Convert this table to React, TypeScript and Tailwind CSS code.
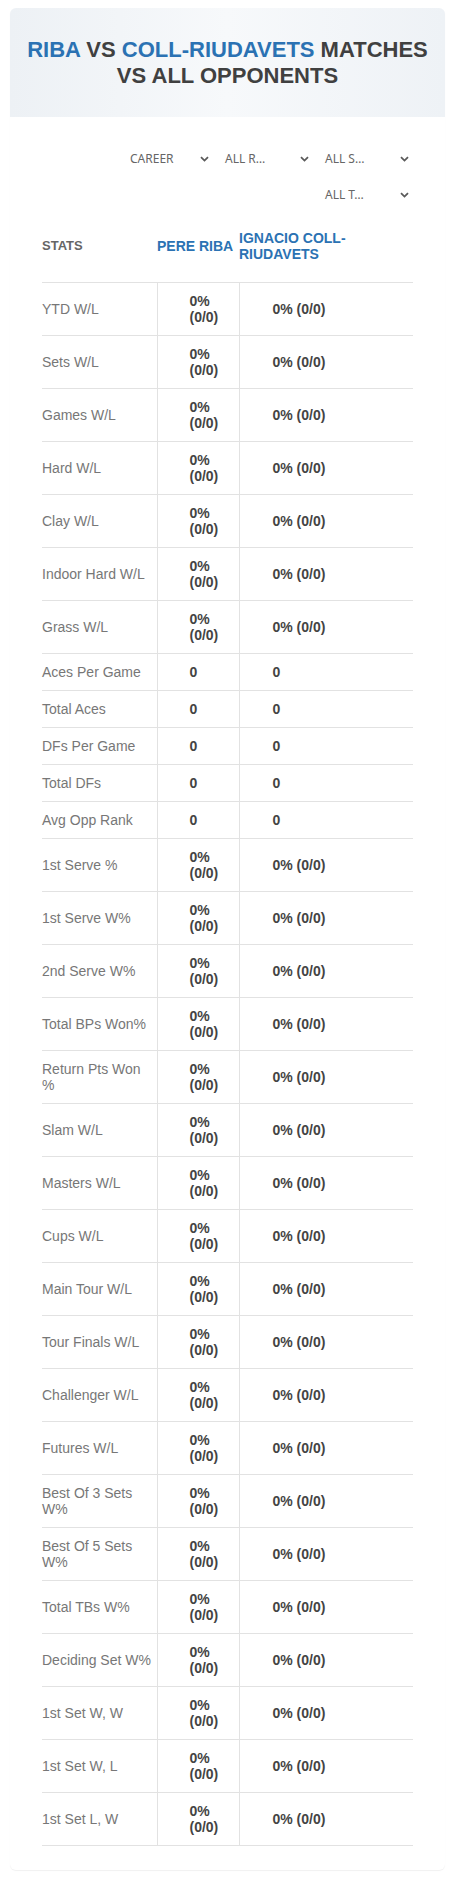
import React from "react";

type Row = { label: string; kind: "pct" | "num" };

const rows: Row[] = [
  { label: "YTD W/L", kind: "pct" },
  { label: "Sets W/L", kind: "pct" },
  { label: "Games W/L", kind: "pct" },
  { label: "Hard W/L", kind: "pct" },
  { label: "Clay W/L", kind: "pct" },
  { label: "Indoor Hard W/L", kind: "pct" },
  { label: "Grass W/L", kind: "pct" },
  { label: "Aces Per Game", kind: "num" },
  { label: "Total Aces", kind: "num" },
  { label: "DFs Per Game", kind: "num" },
  { label: "Total DFs", kind: "num" },
  { label: "Avg Opp Rank", kind: "num" },
  { label: "1st Serve %", kind: "pct" },
  { label: "1st Serve W%", kind: "pct" },
  { label: "2nd Serve W%", kind: "pct" },
  { label: "Total BPs Won%", kind: "pct" },
  { label: "Return Pts Won %", kind: "pct" },
  { label: "Slam W/L", kind: "pct" },
  { label: "Masters W/L", kind: "pct" },
  { label: "Cups W/L", kind: "pct" },
  { label: "Main Tour W/L", kind: "pct" },
  { label: "Tour Finals W/L", kind: "pct" },
  { label: "Challenger W/L", kind: "pct" },
  { label: "Futures W/L", kind: "pct" },
  { label: "Best Of 3 Sets W%", kind: "pct" },
  { label: "Best Of 5 Sets W%", kind: "pct" },
  { label: "Total TBs W%", kind: "pct" },
  { label: "Deciding Set W%", kind: "pct" },
  { label: "1st Set W, W", kind: "pct" },
  { label: "1st Set W, L", kind: "pct" },
  { label: "1st Set L, W", kind: "pct" },
];

function Chevron() {
  return (
    <svg width="9" height="6" viewBox="0 0 9 6" className="shrink-0">
      <path d="M1 1.2 L4.5 4.6 L8 1.2" fill="none" stroke="#5a5a5a" strokeWidth="1.8" />
    </svg>
  );
}

function Select({ label, first }: { label: string; first?: boolean }) {
  return (
    <div
      className={`w-[100px] h-[30px] flex items-center justify-between pr-[4px] text-[12px] text-[#666] ${
        first ? "pl-[17px]" : "pl-[12px]"
      }`}
      style={{ fontFamily: '"Noto Sans", "Open Sans", sans-serif' }}
    >
      <span>{label}</span>
      <Chevron />
    </div>
  );
}

export default function App() {
  return (
    <div
      className="w-[455px] bg-white pt-[8px] pb-[10px]"
      style={{ fontFamily: '"Liberation Sans", Arial, sans-serif' }}
    >
      <div className="mx-[10px] rounded-[6px] bg-white shadow-[0_1px_1px_rgba(0,0,0,0.06)] pb-[24px]">
        <div className="h-[109px] rounded-t-[6px] bg-gradient-to-r from-[#edf1f5] via-[#f7f9fb] to-[#eef2f6] flex items-center justify-center px-[12px]">
          <h1 className="text-center font-bold text-[22px] leading-[26px] text-[#404040]">
            <span className="text-[#2b72b3]">RIBA</span> VS{" "}
            <span className="text-[#2b72b3]">COLL-RIUDAVETS</span> MATCHES VS ALL OPPONENTS
          </h1>
        </div>

        <div className="px-[32px]">
          <div className="mt-[27px] flex flex-wrap justify-end gap-y-[6px]">
            <Select label="CAREER" first />
            <Select label="ALL R…" />
            <Select label="ALL S…" />
            <Select label="ALL T…" />
          </div>

          <table className="w-[371px] table-fixed border-collapse">
            <colgroup>
              <col className="w-[115px]" />
              <col className="w-[82px]" />
              <col className="w-[174px]" />
            </colgroup>
            <thead>
              <tr className="border-b border-[#e2e2e2]">
                <th className="text-left align-middle py-[20px] text-[13px] leading-[16px] font-bold text-[#666]">
                  STATS
                </th>
                <th className="text-left align-middle py-[20px] text-[14px] leading-[16px] font-bold text-[#2b72b3] whitespace-nowrap">
                  PERE RIBA
                </th>
                <th className="text-left align-middle py-[20px] text-[14px] leading-[16px] font-bold text-[#2b72b3]">
                  IGNACIO COLL-RIUDAVETS
                </th>
              </tr>
            </thead>
            <tbody>
              {rows.map((r) => {
                const v = r.kind === "pct" ? "0% (0/0)" : "0";
                return (
                  <tr key={r.label} className="border-b border-[#e2e2e2]">
                    <td className="align-middle py-[10px] pr-[4px] text-[14px] leading-[16px] text-[#777]">
                      {r.label}
                    </td>
                    <td className="align-middle py-[10px] pl-[32px] pr-[4px] text-[14px] leading-[16px] font-bold text-[#444] border-l border-r border-[#e2e2e2]">
                      {v}
                    </td>
                    <td className="align-middle py-[10px] pl-[33px] text-[14px] leading-[16px] font-bold text-[#444]">
                      {v}
                    </td>
                  </tr>
                );
              })}
            </tbody>
          </table>
        </div>
      </div>
    </div>
  );
}
